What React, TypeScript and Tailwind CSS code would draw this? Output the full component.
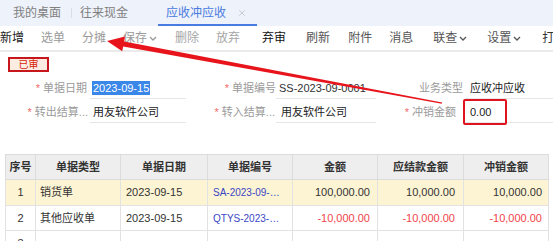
import { X } from 'lucide-react'

const Caret = () => (
  <svg width="8" height="5" viewBox="0 0 8 5" className="ml-[2px]">
    <path d="M1 1l3 3 3-3" fill="none" stroke="currentColor" strokeWidth="1.3" />
  </svg>
)

const Divider = ({ className }: { className: string }) => (
  <span className={`h-[12px] w-px bg-[#dddddd] ${className}`} />
)

const Star = () => <span className="mr-[3px] text-[#f36c6c]">*</span>

const rows = [
  {
    no: '1',
    type: '销货单',
    date: '2023-09-15',
    code: 'SA-2023-09-…',
    amount: '100,000.00',
    due: '10,000.00',
    offset: '10,000.00',
    negative: false,
    bg: 'bg-[#fdf4d4]',
    h: 'h-[26px]',
  },
  {
    no: '2',
    type: '其他应收单',
    date: '2023-09-15',
    code: 'QTYS-2023-…',
    amount: '-10,000.00',
    due: '-10,000.00',
    offset: '-10,000.00',
    negative: true,
    bg: 'bg-white',
    h: 'h-[25px]',
  },
]

export default function App() {
  return (
    <div className="relative h-[241px] w-[553px] overflow-hidden bg-white font-['Liberation_Sans','Noto_Sans_CJK_SC',sans-serif] text-[11px] text-[#333]">
      {/* 页签 */}
      <div className="flex h-[26px] items-stretch bg-[#eef2fa] text-[12px]">
        <div className="flex items-center pl-[13px] pr-[10px] text-[#808080]">我的桌面</div>
        <div className="my-[8px] w-px bg-[#d9dde6]" />
        <div className="flex items-center pl-[8px] text-[#808080]">往来现金</div>
        <div className="ml-[30px] flex items-center gap-[11px] border-b-2 border-[#4a7be0] pl-[8px] pr-[10px] pt-[2px]">
          <span className="text-[#4a7be0]">应收冲应收</span>
          <X className="h-[10px] w-[10px] text-[#b0b4bc]" strokeWidth={1.5} />
        </div>
      </div>

      {/* 工具栏 */}
      <div className="flex h-[26px] items-center whitespace-nowrap border-b-2 border-[#ebebeb] bg-white text-[12px]">
        <span className="text-[#222]">新增</span>
        <span className="ml-[17px] text-[#9a9a9a]">选单</span>
        <span className="ml-[17px] text-[#9a9a9a]">分摊</span>
        <span className="ml-[17px] flex items-center text-[#9a9a9a]">
          保存
          <Caret />
        </span>
        <span className="ml-[18px] text-[#a5a5a5]">删除</span>
        <span className="ml-[17px] text-[#a5a5a5]">放弃</span>
        <Divider className="ml-[12px]" />
        <span className="ml-[10px] text-[#111]">弃审</span>
        <Divider className="ml-[10px]" />
        <span className="ml-[10px] text-[#555]">刷新</span>
        <span className="ml-[18px] text-[#555]">附件</span>
        <span className="ml-[17px] text-[#555]">消息</span>
        <Divider className="ml-[10px]" />
        <span className="ml-[10px] flex items-center text-[#555]">
          联查
          <Caret />
        </span>
        <span className="ml-[20px] flex items-center text-[#555]">
          设置
          <Caret />
        </span>
        <Divider className="ml-[12px]" />
        <span className="ml-[9px] text-[#333]">打</span>
      </div>

      {/* 状态 */}
      <div className="ml-[8px] mt-[5px] flex h-[15px] w-[41px] items-center justify-center border-2 border-[#c8161d] bg-[#fcece2] text-[10px] leading-none text-[#d81e06]">
        已审
      </div>

      {/* 表头字段 */}
      <div className="mt-[4px] grid grid-cols-[90px_96px_90px_100px_89px_88px] gap-y-[1px] whitespace-nowrap">
        <div className="flex h-[23px] items-center justify-end pr-[3px] pt-[2px] text-[#9a9a9a]">
          <Star />
          单据日期
        </div>
        <div className="flex h-[23px] items-center border-b border-[#e6e6e6] pl-[2px] pt-[2px]">
          <span className="bg-[#3a87e8] px-px leading-[14px] text-white">2023-09-15</span>
        </div>
        <div className="flex h-[23px] items-center justify-end pt-[2px] text-[#9a9a9a]">
          <Star />
          单据编号
        </div>
        <div className="flex h-[23px] items-center overflow-hidden border-b border-[#e6e6e6] pl-[3px] pt-[2px] text-[#333]">
          SS-2023-09-0001
        </div>
        <div className="flex h-[23px] items-center justify-end pr-[2px] pt-[2px] text-[#9a9a9a]">业务类型</div>
        <div className="flex h-[23px] items-center border-b border-[#e6e6e6] pl-[5px] pt-[2px] text-[#222]">
          应收冲应收
        </div>

        <div className="flex h-[23px] items-center justify-end pr-[2px] pt-[2px] text-[#9a9a9a]">
          <Star />
          转出结算...
        </div>
        <div className="flex h-[23px] items-center border-b border-[#e6e6e6] pl-[3px] pt-[2px] text-[#222]">
          用友软件公司
        </div>
        <div className="flex h-[23px] items-center justify-end pr-px pt-[2px] text-[#9a9a9a]">
          <Star />
          转入结算...
        </div>
        <div className="flex h-[23px] items-center border-b border-[#e6e6e6] pl-[5px] pt-[2px] text-[#222]">
          用友软件公司
        </div>
        <div className="flex h-[23px] items-center justify-end pr-[9px] pt-[2px] text-[#9a9a9a]">
          <Star />
          冲销金额
        </div>
        <div className="relative flex h-[23px] items-center border-b border-[#e6e6e6] pl-[5px] pt-[2px] text-[#222]">
          0.00
          <span className="absolute left-[-2px] top-[-1px] h-[26px] w-[44px] rounded-[2px] border-2 border-[#e0141e]" />
        </div>
      </div>

      {/* 明细表 */}
      <table className="ml-[5px] mt-[31px] w-[543px] table-fixed border-collapse whitespace-nowrap">
        <colgroup>
          <col className="w-[30px]" />
          <col className="w-[85px]" />
          <col className="w-[87px]" />
          <col className="w-[85px]" />
          <col className="w-[85px]" />
          <col className="w-[86px]" />
          <col className="w-[85px]" />
        </colgroup>
        <thead>
          <tr className="h-[25px] bg-[#eeeeee] text-[#333]">
            <th className="border border-[#dcdcdc] font-bold">序号</th>
            <th className="border border-[#dcdcdc] font-bold">单据类型</th>
            <th className="border border-[#dcdcdc] font-bold">单据日期</th>
            <th className="border border-[#dcdcdc] font-bold">单据编号</th>
            <th className="border border-[#dcdcdc] font-bold">金额</th>
            <th className="border border-[#dcdcdc] font-bold">应结款金额</th>
            <th className="border border-[#dcdcdc] font-bold">冲销金额</th>
          </tr>
        </thead>
        <tbody>
          {rows.map((r) => (
            <tr key={r.no} className={`${r.h} ${r.bg}`}>
              <td className="border border-[#e2e2e2] text-center">{r.no}</td>
              <td className="border border-[#e2e2e2] pl-[4px]">{r.type}</td>
              <td className="border border-[#e2e2e2] pl-[5px]">{r.date}</td>
              <td className="border border-[#e2e2e2] pl-[5px] text-[10px] text-[#3b46c4]">{r.code}</td>
              <td className={`border border-[#e2e2e2] pr-[7px] text-right ${r.negative ? 'text-[#f0454a]' : ''}`}>
                {r.amount}
              </td>
              <td className={`border border-[#e2e2e2] pr-[8px] text-right ${r.negative ? 'text-[#f0454a]' : ''}`}>
                {r.due}
              </td>
              <td className={`border border-[#e2e2e2] pr-[6px] text-right ${r.negative ? 'text-[#f0454a]' : ''}`}>
                {r.offset}
              </td>
            </tr>
          ))}
          <tr className="h-[25px] bg-white">
            <td className="border border-[#e2e2e2] text-center">3</td>
            <td className="border border-[#e2e2e2]" />
            <td className="border border-[#e2e2e2]" />
            <td className="border border-[#e2e2e2]" />
            <td className="border border-[#e2e2e2]" />
            <td className="border border-[#e2e2e2]" />
            <td className="border border-[#e2e2e2]" />
          </tr>
        </tbody>
      </table>

      {/* 标注箭头 */}
      <svg
        className="pointer-events-none absolute left-0 top-0"
        width="553"
        height="241"
        viewBox="0 0 553 241"
      >
        <polygon
          points="107,41 125,36.5 124.2,41.6 442.1,102.4 441.9,103.8 123.2,46.6 122.2,51.3"
          fill="#e8141c"
        />
      </svg>
    </div>
  )
}
